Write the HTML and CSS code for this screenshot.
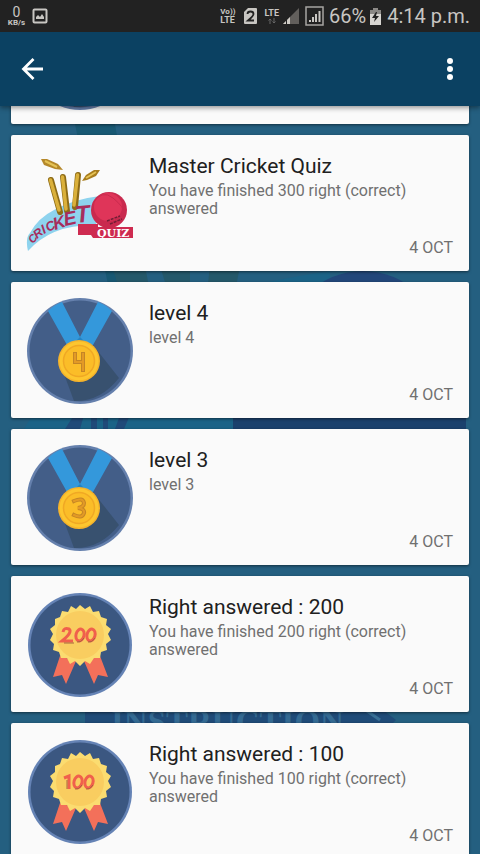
FILE: index.html
```html
<!DOCTYPE html>
<html lang="en">
<head>
<meta charset="utf-8">
<meta name="viewport" content="width=device-width, initial-scale=1">
<title>Achievements</title>
<link rel="stylesheet" href="styles.css">
</head>
<body>
<svg class="defs" aria-hidden="true">
  <defs>
    <g id="medal">
      <circle cx="54" cy="54" r="53" fill="#6580ad"/>
      <circle cx="54" cy="54" r="50.500" fill="#435e88"/>
      <path d="M38 77L48 104Q74 105 93 81L67 48Z" fill="#38516f"/>
      <path d="M22 14Q28 8 36 5L54 40L72 5Q80 8 86 14L67 48L41 48Z" fill="#3498db"/>
      <path d="M54 40L50 44H58Z" fill="#2383c4"/>
      <circle cx="53" cy="64" r="21" fill="#f5b32c"/>
      <circle cx="53" cy="64" r="19.500" fill="#fdc62f"/>
      <circle cx="53" cy="64" r="15.500" fill="#fbbd28" stroke="#f0a824" stroke-width="1.500"/>
    </g>
    <g id="rosette">
      <circle cx="54" cy="54" r="52" fill="#6583b5"/>
      <circle cx="54" cy="54" r="49.500" fill="#3b5781"/>
      <path d="M34 65L27 86L36 84L40 93L50 70Z M74 65L82 86L72 84L68 93L58 70Z" fill="#f3705a"/>
      <path fill="#fbdc70" d="M54 14L59 18L64 15L67 21L73 20L75 26L81 28L80 34L85 38L82 43L85 49L80 53L81 59L75 61L74 67L68 67L64 73L59 70L54 75L49 70L44 73L41 67L35 67L33 61L27 59L28 53L24 49L27 43L24 38L29 34L29 28L34 26L36 20L42 21L45 15L50 18Z"/>
      <circle cx="54" cy="44" r="24" fill="#f9cd60"/>
    </g>
  </defs>
</svg>

<header class="top">
  <div class="status">
    <span class="speed"><b>0</b><small>KB/s</small></span>
    <svg class="picture" viewBox="0 0 16 16" width="16" height="16"><rect x="1.500" y="1.500" width="13" height="13" rx="1" fill="none" stroke="#c8c6c2" stroke-width="2"/><path d="M4 11V9L6 7L8 9L10 6L12 9V11Z" fill="#c8c6c2"/></svg>
    <span class="stack volte"><span class="vo">Vo))</span><span>LTE</span></span>
    <svg class="sim" viewBox="0 0 13 16" width="13" height="16"><path d="M4 0H12Q13 0 13 1V15Q13 16 12 16H1Q0 16 0 15V4Z" fill="#c8c6c2"/><path d="M3.500 6Q3.500 3.500 6.500 3.500T9.500 6Q9.500 8 4 12.500H10" fill="none" stroke="#222" stroke-width="1.800"/></svg>
    <span class="stack lte"><span>LTE</span><svg viewBox="0 0 10 6" width="10" height="6"><path d="M3 6V1M1.500 2.500L3 1L4.500 2.500M7 0V5M5.500 3.500L7 5L8.500 3.500" stroke="#666" fill="none"/></svg></span>
    <svg class="signal" viewBox="0 0 16 16" width="16" height="16"><path d="M0 16L16 0V16Z" fill="#625f5c"/><path d="M0 16L7 9V16Z" fill="#cfccc6"/><path d="M3.500 7V16" stroke="#222"/></svg>
    <svg class="boxed" viewBox="0 0 19 20" width="19" height="20"><rect x="1" y="1" width="17" height="18" fill="none" stroke="#a7a5a2" stroke-width="1.500"/><path d="M5 16V14M8 16V11M11 16V8M14.500 16V5" stroke="#c8c6c2" stroke-width="2"/></svg>
    <span class="percent">66%</span>
    <svg class="battery" viewBox="0 0 11 17" width="11" height="17"><path d="M3 0H8V2H11V17H0V2H3Z" fill="#d8d6d2"/><path d="M0 2H3V0H8V2H11V6H0Z" fill="#8b8986"/><path d="M6 4L2 10H5L4 14L9 8H6L7 4Z" fill="#222"/></svg>
    <span class="clock">4:14 p.m.</span>
  </div>
  <nav class="toolbar">
    <button aria-label="Back"><svg viewBox="0 0 24 24" width="24" height="24"><path d="M23 12H3M13.500 2L3.500 12L13.500 22" fill="none" stroke="#fff" stroke-width="2.800"/></svg></button>
    <button aria-label="More options"><svg viewBox="0 0 24 24" width="24" height="24"><g fill="#fff"><circle cx="12" cy="4" r="3"/><circle cx="12" cy="12" r="3"/><circle cx="12" cy="20" r="3"/></g></svg></button>
  </nav>
</header>

<main class="content">
  <svg class="backdrop" viewBox="0 0 480 748" preserveAspectRatio="xMidYMin slice" aria-hidden="true">
    <path d="M75 18H115L140 170L170 310H135Z" fill="#185873"/>
    <path d="M112 160H145L150 186H120ZM160 160H190V186H168ZM210 160H240L235 186H207Z" fill="#24586a"/>
    <path d="M20 330Q90 200 330 165V330Z" fill="#1b6387"/>
    <circle cx="363" cy="245" r="80" fill="#22477a"/>
    <rect x="233" y="300" width="233" height="100" fill="#1b416d"/>
    <path d="M65 323L74 309H84L80 323ZM91 323V309H97V323ZM103 323V309H108V323ZM115 323L120 309H130L124 323Z" fill="#204a79"/>
    <path d="M85 590H365L396 614L370 640H85Z" fill="#1f4b78"/>
    <text x="111" y="627" class="instruction">INSTRUCTION</text>
    <path d="M367 605L380 614" stroke="#397096" stroke-width="3"/>
  </svg>

  <ul class="list">
    <li class="card partial"><svg class="badge" viewBox="0 0 108 108"><use href="#medal"/></svg></li>
    <li class="card">
      <svg class="badge" viewBox="0 0 108 108" role="img" aria-label="Cricket Quiz">
        <path d="M2 101Q-1 88 4 83Q12 68 28 60Q48 49 74 46L70 75Q26 74 2 101Z" fill="#8ed3ee"/>
        <g stroke-linecap="round" fill="none">
          <path d="M25 30L34 62M37 27L41 61M52 25L49 57" stroke="#8d6b16" stroke-width="6"/>
          <path d="M24.500 30L33 60M36.500 27L40 59M51.500 25L48 55" stroke="#dab03b" stroke-width="3.500"/>
        </g>
        <path d="M15 9L21 9L32 14L37 20L29 19L18 15Z" fill="#b5882a"/><path d="M19 11L31 17" stroke="#e5c355" stroke-width="2"/>
        <path d="M56 31L60 25L68 20L74 20L70 26L61 30Z" fill="#a87c1d"/><path d="M60 28L70 22" stroke="#e5c355" stroke-width="2"/>
        <g class="cricket"><text x="7" y="94" transform="rotate(-50 7 94)" font-size="11">C</text><text x="11" y="89" transform="rotate(-38 11 89)" font-size="12">R</text><text x="18" y="84" transform="rotate(-30 18 84)" font-size="13">I</text><text x="22" y="82" transform="rotate(-26 22 82)" font-size="13">C</text><text x="29" y="80" transform="rotate(-18 29 80)" font-size="17">K</text><text x="39" y="76" transform="rotate(-12 39 76)" font-size="19">E</text><text x="50" y="73" transform="rotate(-6 50 73)" font-size="24">T</text></g>
        <path d="M52 74H72V77H107V88H67L65 85H52Z" fill="#ce2b50"/>
        <circle cx="83" cy="60" r="18" fill="#c92a4e"/><circle cx="82" cy="57" r="14" fill="#df3559"/>
        <path d="M67 53Q76 39 87 48T99 64" fill="none" stroke="#c92a4e"/><path d="M81 71L94 66M84 74L96 69" stroke="#711e35" stroke-width="1.500" stroke-dasharray="3 1"/>
        <text x="71" y="87" class="quiz">QUIZ</text>
      </svg>
      <div class="body"><h2>Master Cricket Quiz</h2><p>You have finished 300 right (correct) answered</p><time>4 OCT</time></div>
    </li>
    <li class="card">
      <svg class="badge" viewBox="0 0 108 108"><use href="#medal"/><path d="M49 57V65H57M57 57V73" class="digit shade"/><path d="M49 57V65H57M57 57V73" class="digit"/></svg>
      <div class="body"><h2>level 4</h2><p>level 4</p><time>4 OCT</time></div>
    </li>
    <li class="card">
      <svg class="badge" viewBox="0 0 108 108"><use href="#medal"/><path d="M48 57Q57 53 58 59Q58 63 52 64Q59 65 58 69Q56 75 48 71" class="digit shade"/><path d="M48 57Q57 53 58 59Q58 63 52 64Q59 65 58 69Q56 75 48 71" class="digit"/></svg>
      <div class="body"><h2>level 3</h2><p>level 3</p><time>4 OCT</time></div>
    </li>
    <li class="card">
      <svg class="badge" viewBox="0 0 108 108"><use href="#rosette"/><g class="score"><path d="M37 41Q38 36 43 38Q47 41 36 50H47"/><ellipse cx="54" cy="44" rx="4" ry="6" transform="rotate(15 54 44)"/><ellipse cx="65" cy="44" rx="4" ry="6" transform="rotate(15 65 44)"/></g><path class="score-shade" d="M38 52H48M51 51Q55 52 58 47M62 51Q66 52 69 47"/></svg>
      <div class="body"><h2>Right answered : 200</h2><p>You have finished 200 right (correct) answered</p><time>4 OCT</time></div>
    </li>
    <li class="card">
      <svg class="badge" viewBox="0 0 108 108"><use href="#rosette"/><g class="score"><path d="M38 40L43 38V51"/><ellipse cx="52" cy="44" rx="4" ry="6" transform="rotate(15 52 44)"/><ellipse cx="63" cy="44" rx="4" ry="6" transform="rotate(15 63 44)"/></g><path class="score-shade" d="M41 42V51M49 51Q53 52 56 47M60 51Q64 52 67 47"/></svg>
      <div class="body"><h2>Right answered : 100</h2><p>You have finished 100 right (correct) answered</p><time>4 OCT</time></div>
    </li>
  </ul>
</main>
</body>
</html>
```
FILE: styles.css
```css
* { box-sizing: border-box; }
body {
  margin: 0;
  height: 100vh;
  overflow: hidden;
  display: flex;
  flex-direction: column;
  background: #245f80;
  font-family: Roboto, "Noto Sans", sans-serif;
  color: #202020;
}
.defs { position: absolute; width: 0; height: 0; }
.top { position: relative; z-index: 2; flex: none; background: #0b4162; box-shadow: 0 2px 5px rgba(0, 0, 0, .4); }
.status {
  height: 32px;
  padding: 0 10px 0 7px;
  display: flex;
  align-items: center;
  background: #222;
  color: #c8c6c2;
}
.status svg { flex: none; }
.speed { display: flex; flex-direction: column; align-items: center; width: 19px; }
.speed b { font-size: 14px; font-weight: 400; line-height: 14px; }
.speed small { font-size: 8px; font-weight: 700; line-height: 8px; }
.picture { margin-left: 6px; }
.stack { display: flex; flex-direction: column; font-size: 9px; font-weight: 700; line-height: 9px; }
.vo { font-size: 8px; }
.volte { margin-left: auto; }
.sim { margin-left: 8px; }
.lte { margin-left: 8px; align-items: center; }
.signal { margin-left: 4px; }
.boxed { margin-left: 6px; }
.percent { margin-left: 5px; font-size: 20px; }
.battery { margin-left: 4px; }
.clock { margin-left: 6px; font-size: 20px; white-space: nowrap; }
.toolbar { height: 74px; padding: 0 10px; display: flex; justify-content: space-between; align-items: center; }
.toolbar button { padding: 10px; border: 0; background: none; display: flex; }
.toolbar button:last-child { padding-right: 8px; }
.content { position: relative; flex: 1; min-height: 0; overflow: hidden; }
.backdrop { position: absolute; inset: 0; width: 100%; height: 100%; }
.instruction { font: 700 33px "Liberation Serif", serif; fill: #346a92; }
.list { position: relative; margin: 0; padding: 0 11px; list-style: none; display: flex; flex-direction: column; gap: 11px; }
.card {
  height: 136px;
  padding: 15px;
  padding-right: 16px;
  display: flex;
  gap: 15px;
  border-radius: 2px;
  background: #fafafa;
  box-shadow: 0 1px 3px rgba(0, 0, 0, .5);
}
.partial { margin-top: -118px; }
.badge { width: 108px; height: 108px; flex: none; }
.body { flex: 1; display: flex; flex-direction: column; }
h2 { margin: 0; font-size: 21px; font-weight: 400; line-height: 32px; }
p { margin: 0; font-size: 16px; line-height: 18px; color: #707070; }
time { margin-top: auto; align-self: flex-end; font-size: 16px; line-height: 16px; color: #707070; }
.cricket { font-family: "Liberation Sans", sans-serif; font-weight: 700; font-style: italic; fill: #a72d5c; }
.quiz { font: 700 11px "DejaVu Serif", serif; fill: #fff; }
.digit { fill: none; stroke: #e39a25; stroke-width: 2; stroke-linecap: square; }
.shade { stroke: #c48526; stroke-width: 4; }
.score { fill: none; stroke: #f0604c; stroke-width: 3; }
.score-shade { fill: none; stroke: #a8663e; stroke-width: 1; }
```
